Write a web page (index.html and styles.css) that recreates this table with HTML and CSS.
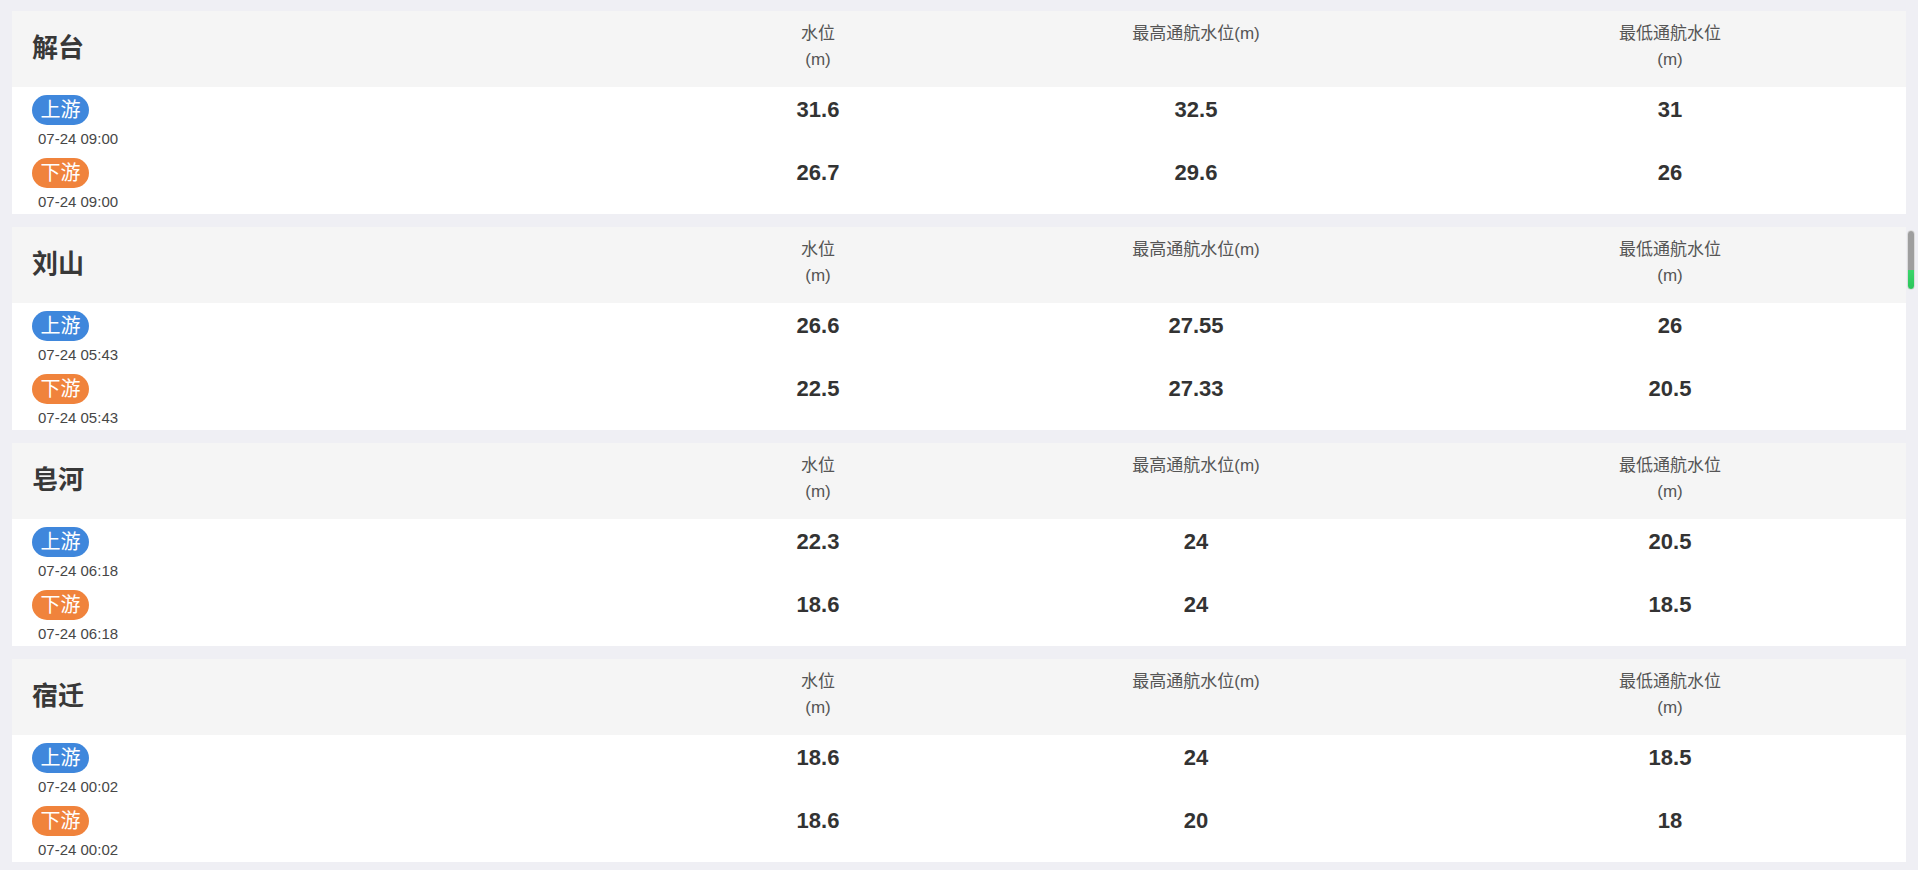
FILE: index.html
```html
<!DOCTYPE html>
<html lang="zh-CN">
<head>
<meta charset="utf-8">
<title>水位</title>
<link rel="stylesheet" href="styles.css">
</head>
<body>
<div class="list">
  <section class="station">
    <div class="st-head">
      <div class="st-name">解台</div>
      <div class="st-label">水位<br>(m)</div>
      <div class="st-label">最高通航水位(m)</div>
      <div class="st-label">最低通航水位<br>(m)</div>
    </div>
    <div class="st-body">
      <div class="st-row">
        <div class="st-side"><span class="tag tag-up">上游</span><span class="time">07-24 09:00</span></div>
        <div class="val">31.6</div><div class="val">32.5</div><div class="val">31</div>
      </div>
      <div class="st-row">
        <div class="st-side"><span class="tag tag-down">下游</span><span class="time">07-24 09:00</span></div>
        <div class="val">26.7</div><div class="val">29.6</div><div class="val">26</div>
      </div>
    </div>
  </section>
  <section class="station">
    <div class="st-head">
      <div class="st-name">刘山</div>
      <div class="st-label">水位<br>(m)</div>
      <div class="st-label">最高通航水位(m)</div>
      <div class="st-label">最低通航水位<br>(m)</div>
    </div>
    <div class="st-body">
      <div class="st-row">
        <div class="st-side"><span class="tag tag-up">上游</span><span class="time">07-24 05:43</span></div>
        <div class="val">26.6</div><div class="val">27.55</div><div class="val">26</div>
      </div>
      <div class="st-row">
        <div class="st-side"><span class="tag tag-down">下游</span><span class="time">07-24 05:43</span></div>
        <div class="val">22.5</div><div class="val">27.33</div><div class="val">20.5</div>
      </div>
    </div>
  </section>
  <section class="station">
    <div class="st-head">
      <div class="st-name">皂河</div>
      <div class="st-label">水位<br>(m)</div>
      <div class="st-label">最高通航水位(m)</div>
      <div class="st-label">最低通航水位<br>(m)</div>
    </div>
    <div class="st-body">
      <div class="st-row">
        <div class="st-side"><span class="tag tag-up">上游</span><span class="time">07-24 06:18</span></div>
        <div class="val">22.3</div><div class="val">24</div><div class="val">20.5</div>
      </div>
      <div class="st-row">
        <div class="st-side"><span class="tag tag-down">下游</span><span class="time">07-24 06:18</span></div>
        <div class="val">18.6</div><div class="val">24</div><div class="val">18.5</div>
      </div>
    </div>
  </section>
  <section class="station">
    <div class="st-head">
      <div class="st-name">宿迁</div>
      <div class="st-label">水位<br>(m)</div>
      <div class="st-label">最高通航水位(m)</div>
      <div class="st-label">最低通航水位<br>(m)</div>
    </div>
    <div class="st-body">
      <div class="st-row">
        <div class="st-side"><span class="tag tag-up">上游</span><span class="time">07-24 00:02</span></div>
        <div class="val">18.6</div><div class="val">24</div><div class="val">18.5</div>
      </div>
      <div class="st-row">
        <div class="st-side"><span class="tag tag-down">下游</span><span class="time">07-24 00:02</span></div>
        <div class="val">18.6</div><div class="val">20</div><div class="val">18</div>
      </div>
    </div>
  </section>
</div>
<div class="scroll-thumb"></div>
</body>
</html>
```
FILE: styles.css
```css
html, body {
  margin: 0;
  padding: 0;
  background: #efeff4;
  overflow: hidden;
}
body {
  font-family: "Liberation Sans", "Noto Sans CJK SC", sans-serif;
  color: #333;
}
.list {
  display: flex;
  flex-direction: column;
  gap: 13px;
  padding: 11px 12px 8px;
}
.station {
  background: #fff;
}
.st-head,
.st-row {
  display: grid;
  grid-template-columns: 666fr 280fr 476fr 472fr;
}
.st-head {
  background: #f5f5f5;
  height: 76px;
  box-sizing: border-box;
}
.st-name {
  align-self: center;
  padding-left: 20px;
  font-size: 26px;
  font-weight: bold;
  color: #383838;
  line-height: 30px;
  margin-top: -3px;
}
.st-label {
  padding-top: 10px;
  text-align: center;
  font-size: 17px;
  line-height: 25.5px;
  color: #555;
}
.st-body {
  padding: 8px 0 2px;
  display: flex;
  flex-direction: column;
  gap: 9px;
}
.st-side {
  display: flex;
  flex-direction: column;
  align-items: flex-start;
  padding-left: 20px;
}
.tag {
  display: inline-block;
  height: 30px;
  line-height: 30px;
  padding: 0 8.5px;
  border-radius: 15px;
  color: #fff;
  font-size: 20px;
}
.tag-up {
  background: #3f87dc;
}
.tag-down {
  background: #f0833c;
}
.time {
  margin-top: 3px;
  padding-left: 6px;
  font-size: 15px;
  line-height: 21px;
  color: #474747;
}
.val {
  text-align: center;
  font-size: 22px;
  font-weight: bold;
  line-height: 30px;
  color: #333;
}
.scroll-thumb {
  position: fixed;
  right: 3px;
  top: 230px;
  width: 6px;
  height: 58px;
  border-radius: 4px;
  border: 1px solid #dcdcdc;
  background: linear-gradient(to bottom, #9e9e9e 0, #9e9e9e 68%, #3bd46b 68%, #2bc65a 100%);
}
```
